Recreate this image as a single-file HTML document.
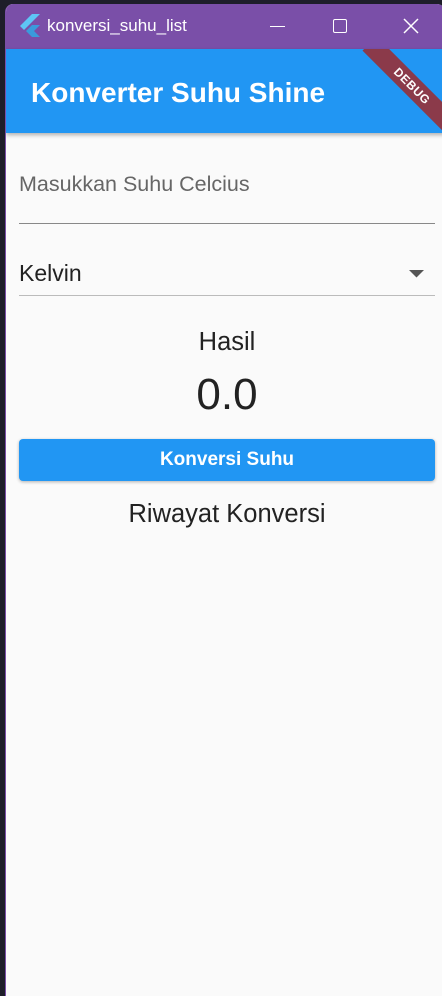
<!DOCTYPE html>
<html><head><style>
*{margin:0;padding:0;box-sizing:border-box}
body{width:442px;height:993px;background:#1e1e2a;position:relative;overflow:hidden;font-family:"Liberation Sans","DejaVu Sans",sans-serif}
.win{position:absolute;left:5px;top:4px;width:440px;height:992px;background:#fafafa;border-left:1px solid #7a4fa8;border-radius:8px 8px 0 0;overflow:hidden}
.tb{position:absolute;left:0;top:0;right:0;height:45px;background:#7a4fa8;color:#fff}
.tb .t{position:absolute;left:41px;top:12px;font-size:17px}
.ab{position:absolute;left:0;top:45px;right:0;height:84px;background:#2196f3;box-shadow:0 2px 4px rgba(0,0,0,.3);overflow:hidden}
.ab .t{position:absolute;left:25px;top:28px;color:#fff;font-size:28px;font-weight:bold}
.c{position:absolute;text-align:center;left:13px;width:416px}
</style></head><body>
<div class="win">
 <div class="tb">
  <svg style="position:absolute;left:14px;top:10px" width="20" height="24" viewBox="0 0 20 24"><path d="M12 0L0 12l4 4L20 0z" fill="#5ec5f5"/><path d="M12 11L6 17l6 6h8l-6-6 6-6z" fill="#3a9bdc"/></svg>
  <div class="t">konversi_suhu_list</div>
  <div style="position:absolute;left:264px;top:22px;width:15px;height:1px;background:#fff"></div>
  <div style="position:absolute;left:327px;top:15px;width:14px;height:14px;border:1.5px solid #fff;border-radius:2px"></div>
  <svg style="position:absolute;left:397px;top:14px" width="16" height="16"><path d="M1 1L15 15M15 1L1 15" stroke="#fff" stroke-width="1.5"/></svg>
 </div>
 <div class="ab"><div class="t">Konverter Suhu Shine</div>
  <div style="position:absolute;left:346px;top:27px;width:120px;height:20px;background:#8b3a4a;transform:rotate(45deg);color:#fff;font-size:12px;font-weight:bold;text-align:center;line-height:20px;letter-spacing:.5px">DEBUG</div>
 </div>
 <div style="position:absolute;left:13px;top:168px;font-size:21.5px;color:#666">Masukkan Suhu Celcius</div>
 <div style="position:absolute;left:13px;top:219px;width:416px;height:1px;background:#888"></div>
 <div style="position:absolute;left:13px;top:256px;font-size:23px;color:#222">Kelvin</div>
 <svg style="position:absolute;left:403px;top:266px" width="16" height="8"><path d="M0 0h15L7.5 7.5z" fill="#555"/></svg>
 <div style="position:absolute;left:13px;top:291px;width:416px;height:1px;background:#bbb"></div>
 <div class="c" style="top:324px;font-size:25.5px;color:#222">Hasil</div>
 <div class="c" style="top:366px;font-size:44px;color:#222">0.0</div>
 <div style="position:absolute;left:13px;top:435px;width:416px;height:42px;background:#2196f3;border-radius:4px;box-shadow:0 1px 3px rgba(0,0,0,.3);color:#fff;font-weight:bold;font-size:19px;text-align:center;line-height:42px">Konversi Suhu</div>
 <div class="c" style="top:496px;font-size:25.5px;color:#222">Riwayat Konversi</div>
</div>
</body></html>
